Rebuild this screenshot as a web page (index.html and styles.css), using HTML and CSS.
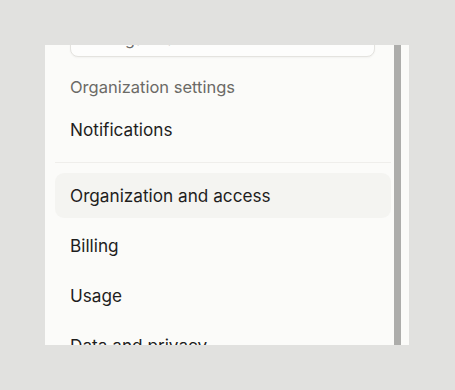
FILE: index.html
```html
<!DOCTYPE html>
<html lang="en">
<head>
  <meta charset="UTF-8">
  <title>Settings</title>
  <link rel="stylesheet" href="styles.css">
</head>
<body>
  <div class="panel">
    <div class="scroll" id="scroll">
      <!-- Search field, scrolled partly out of view -->
      <div class="search">
        <svg class="search-icon" width="14" height="14" viewBox="0 0 14 14">
          <rect x="1" y="2" width="12" height="10" rx="1.5" fill="none" stroke="#6b6a66" stroke-width="1.4"/>
        </svg>
        <span class="search-text">Organization</span>
      </div>

      <div class="section-title">Organization settings</div>
      <a class="item">Notifications</a>
      <div class="divider"></div>
      <a class="item active">Organization and access</a>
      <a class="item">Billing</a>
      <a class="item">Usage</a>
      <a class="item">Data and privacy</a>
      <a class="item">Members</a>
    </div>
    <div class="scrollbar"></div>
  </div>

  <script>
    // keep the list scrolled a little, like the settings sidebar after search
    document.getElementById('scroll').scrollTop = 24;
  </script>
</body>
</html>
```

FILE: styles.css
```css
body {
  margin: 0;
  background-color: #e1e1df;
  font-family: Inter, "Noto Sans", sans-serif;
  color: #1f1e1d;
  padding: 45px 46px 45px 45px;
}
.panel {
  display: flex;
  height: 300px;
  width: 364px;
  background-color: #fbfbf9;
  padding-right: 8px;
  box-sizing: border-box;
}
.scroll {
  flex: 1;
  overflow: hidden;
  padding: 0 3px 0 10px;
  display: flex;
  flex-direction: column;
  gap: 5px;
}
.scrollbar {
  width: 7px;
  background-color: #adadab;
}
/* Search box */
.search {
  flex: none;
  height: 34px;
  margin: 0 16px 15px 15px;
  border: 1px solid #e4e3df;
  border-radius: 8px;
  background-color: #fdfdfc;
  box-shadow: 0 1px 2px rgba(0, 0, 0, 0.04);
  display: flex;
  align-items: center;
  gap: 10px;
  padding: 0 12px;
  font-size: 16px;
  color: #6b6a66;
}
.search-icon {
  flex: none;
}
.section-title {
  flex: none;
  font-size: 16.5px;
  color: #6b6a66;
  padding: 0 15px;
  height: 20px;
  line-height: 20px;
  margin-bottom: 5px;
}
.item {
  flex: none;
  display: flex;
  align-items: center;
  height: 45px;
  padding: 0 15px;
  border-radius: 9px;
  font-size: 17.2px;
  color: #1f1e1d;
}
.item.active {
  background-color: #f4f4f1;
}
.divider {
  flex: none;
  height: 1px;
  background-color: #efeeeb;
  margin: 5px 0;
}
```
